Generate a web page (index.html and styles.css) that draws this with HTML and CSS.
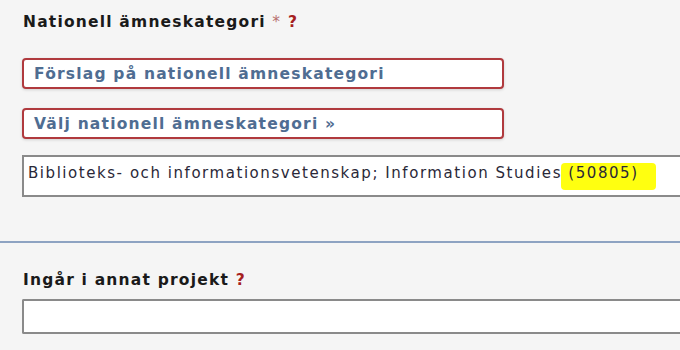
FILE: index.html
```html
<!DOCTYPE html>
<html lang="sv">
<head>
    <meta charset="UTF-8">
    <title>Nationell ämneskategori</title>
    <link rel="stylesheet" href="styles.css">
</head>
<body>
    <section class="field">
        <div class="field-label">Nationell ämneskategori <span class="required">*</span> <span class="help">?</span></div>
        <button class="pick-btn">Förslag på nationell ämneskategori</button>
        <button class="pick-btn">Välj nationell ämneskategori »</button>
        <div class="value-box">Biblioteks- och informationsvetenskap; Information Studies <span class="marker">(50805)</span></div>
    </section>
    <hr class="divider">
    <section class="field field-second">
        <div class="field-label">Ingår i annat projekt <span class="help">?</span></div>
        <div class="text-input"></div>
    </section>
</body>
</html>
```

FILE: styles.css
```css
body {
    margin: 0;
    background: #f5f5f5;
    font-family: "DejaVu Sans", Verdana, sans-serif;
    overflow: hidden;
}

.field {
    display: flex;
    flex-direction: column;
    align-items: flex-start;
    padding: 13px 0 0 22px;
}

.field-label {
    font-size: 15.5px;
    line-height: 18px;
    font-weight: bold;
    letter-spacing: 1.2px;
    color: #1a1a1a;
    margin-left: 1px;
    margin-bottom: 27px;
}

.required {
    color: #b87070;
    font-weight: normal;
}

.help {
    color: #a52020;
}

.pick-btn {
    width: 482px;
    height: 31px;
    margin-bottom: 19px;
    padding: 0 0 0 10px;
    text-align: left;
    background: #fff;
    border: 2px solid #b03a3e;
    border-radius: 4px;
    box-shadow: 0 1px 3px rgba(0, 0, 0, 0.15);
    font-family: inherit;
    font-size: 15.5px;
    font-weight: bold;
    letter-spacing: 1.2px;
    color: #4f6d92;
}

.pick-btn + .pick-btn {
    margin-bottom: 16px;
}

.value-box {
    align-self: stretch;
    height: 42px;
    box-sizing: border-box;
    border: 2px solid #8a8a8a;
    border-right: 0;
    background: #fff;
    padding: 7px 0 0 4px;
    font-size: 15px;
    line-height: 18px;
    letter-spacing: 1.55px;
    color: #2a2838;
    white-space: nowrap;
    overflow: hidden;
}

.marker {
    background: #ffff10;
    padding: 1px 17px 8px 7px;
    margin-left: -7px;
    border-radius: 4px;
}

.divider {
    margin: 44px 0 0;
    border: 0;
    border-top: 2px solid #8ea3c2;
}

.field-second {
    padding-top: 28px;
}

.field-second .field-label {
    margin-bottom: 10px;
}

.text-input {
    align-self: stretch;
    height: 35px;
    box-sizing: border-box;
    border: 2px solid #8a8a8a;
    border-right: 0;
    border-radius: 2px 0 0 2px;
    background: #fff;
}
```
